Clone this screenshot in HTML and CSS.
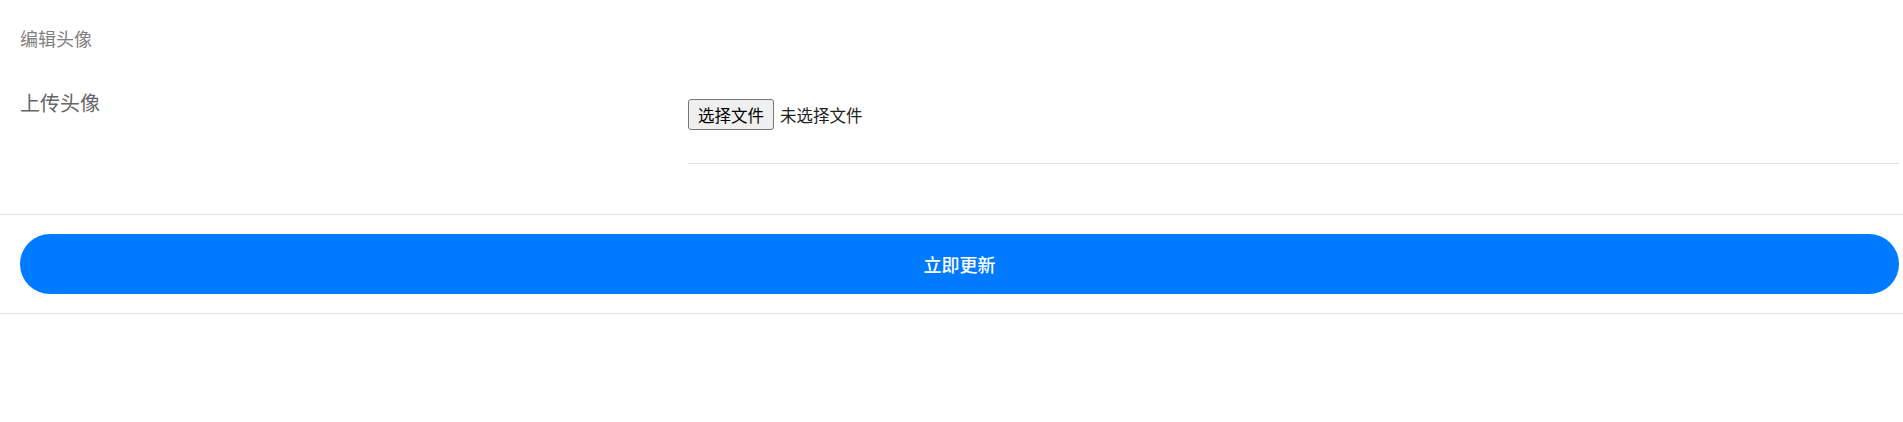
FILE: index.html
```html
<!DOCTYPE html>
<html lang="zh-CN">
<head>
    <meta charset="UTF-8">
    <meta name="viewport" content="width=device-width, initial-scale=1.0">
    <title>编辑头像</title>
    <link rel="stylesheet" href="styles.css">
</head>
<body>

    <div class="title">编辑头像</div>

    <form class="avatar-form">
        <div class="form-row">
            <label class="label">上传头像</label>
            <div class="field">
                <button type="button" class="file-btn">选择文件</button>
                <span class="file-name">未选择文件</span>
            </div>
        </div>

        <div class="actions">
            <button type="submit" class="submit-btn">立即更新</button>
        </div>
    </form>

</body>
</html>
```

FILE: styles.css
```css
body {
    margin: 0;
    font-family: "Noto Sans CJK SC", "Liberation Sans", sans-serif;
    background: #fff;
}

.title {
    padding: 26px 20px 0;
    font-size: 18px;
    line-height: 24px;
    color: #808080;
}

.form-row {
    display: grid;
    grid-template-columns: 668px 1fr;
    margin-top: 30px;
    padding: 0 4px 50px 20px;
}

.label {
    padding-top: 12px;
    font-size: 20px;
    line-height: 21px;
    color: #666;
}

.field {
    display: flex;
    align-items: center;
    gap: 6px;
    padding: 19px 0 33px;
    border-bottom: 1px solid #e0e0e0;
}

.file-btn {
    height: 31px;
    padding: 0 9px;
    font-family: inherit;
    font-size: 16.5px;
    color: #000;
    background: #efefef;
    border: 1px solid #767676;
    border-radius: 3px;
}

.file-name {
    font-size: 16.5px;
    color: #222;
}

.actions {
    padding: 19px 4px 19px 20px;
    border-top: 1px solid #e0e0e0;
    border-bottom: 1px solid #e0e0e0;
}

.submit-btn {
    display: block;
    width: 100%;
    height: 60px;
    font-family: inherit;
    font-size: 18px;
    font-weight: 500;
    color: #fff;
    background: #007bff;
    border: none;
    border-radius: 30px;
}
```
